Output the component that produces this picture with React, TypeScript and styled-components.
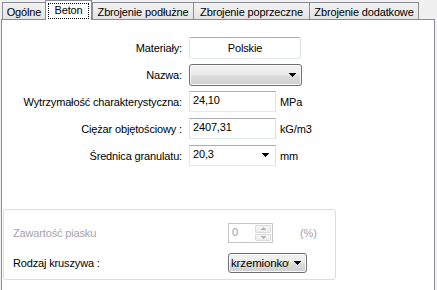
import React from "react";
import styled, { createGlobalStyle, css } from "styled-components";

const GlobalStyle = createGlobalStyle`
  html, body { margin: 0; padding: 0; background: #f0f0f0; }
  body {
    width: 437px; height: 290px; overflow: hidden;
    font-family: "Liberation Sans", Arial, sans-serif;
    font-size: 11px; letter-spacing: -0.15px; color: #000;
  }
  #root { width: 437px; height: 290px; overflow: hidden; }
`;

const Window = styled.div`
  width: 437px;
  height: 290px;
  display: flex;
  flex-direction: column;
  overflow: hidden;
`;

const TabStrip = styled.div`
  display: flex;
  align-items: flex-start;
  height: 20px;
  padding-left: 2px;
  position: relative;
  z-index: 2;
  flex: none;
`;

const Tab = styled.div<{ $w: number; $ml?: number; $active?: boolean }>`
  box-sizing: border-box;
  width: ${(p) => p.$w}px;
  margin-left: ${(p) => p.$ml ?? 0}px;
  margin-top: 2px;
  height: 17px;
  padding-top: 2px;
  border: 1px solid #898c95;
  border-bottom: none;
  background: linear-gradient(#f3f3f3, #e4e4e4);
  display: flex;
  justify-content: center;
  line-height: 14px;
  white-space: nowrap;
  ${(p) =>
    p.$active &&
    css`
      margin-top: 0;
      height: 20px;
      padding: 2px 2px 0 2px;
      background: #fff;
    `}
`;

const Focus = styled.div`
  box-sizing: border-box;
  width: 100%;
  height: 16px;
  border: 1px dotted #000;
  text-align: center;
  line-height: 13px;
`;

const Panel = styled.div`
  box-sizing: border-box;
  margin: -1px 0 0 1px;
  width: 434px;
  height: 300px;
  flex: none;
  border: 1px solid #898c95;
  background: #fff;
  position: relative;
  z-index: 1;
  padding: 17px 0 0 0;
`;

const Form = styled.div`
  display: flex;
  flex-direction: column;
  gap: 6px;
`;

const Row = styled.div`
  display: flex;
  align-items: center;
  height: 21px;
`;

const Label = styled.div`
  width: 180px;
  margin-right: 7px;
  text-align: right;
  white-space: nowrap;
`;

const Unit = styled.div<{ $gap?: number; $disabled?: boolean }>`
  margin-left: ${(p) => p.$gap ?? 4}px;
  color: ${(p) => (p.$disabled ? "#a3a3a3" : "#000")};
  white-space: nowrap;
`;

const boxBorder = css`
  border: 1px solid;
  border-color: #abadb3 #dbdfe6 #e3e9ef #e2e3ea;
  background: #fff;
`;

const ReadBox = styled.div<{ $w: number }>`
  box-sizing: border-box;
  width: ${(p) => p.$w}px;
  height: 22px;
  ${boxBorder};
  border-radius: 2px;
  display: flex;
  align-items: center;
  justify-content: center;
`;

const TextBox = styled.div<{ $w: number }>`
  box-sizing: border-box;
  width: ${(p) => p.$w}px;
  height: 21px;
  ${boxBorder};
  padding: 1px 3px 0 3px;
  line-height: 15px;
`;

const EditCombo = styled.div<{ $w: number }>`
  box-sizing: border-box;
  width: ${(p) => p.$w}px;
  height: 21px;
  ${boxBorder};
  padding: 1px 6px 0 3px;
  line-height: 15px;
  display: flex;
  justify-content: space-between;
  align-items: flex-start;
  svg { margin-top: 6px; }
`;

const ButtonCombo = styled.div<{ $w: number; $h: number }>`
  box-sizing: border-box;
  width: ${(p) => p.$w}px;
  height: ${(p) => p.$h}px;
  border: 1px solid #707070;
  border-radius: 3px;
  background: linear-gradient(#f2f2f2 0%, #ebebeb 50%, #dddddd 51%, #cfcfcf 100%);
  box-shadow: inset 0 0 0 1px #fbfbfb;
  display: flex;
  align-items: center;
  justify-content: space-between;
  padding: 0 5px 0 2px;
  overflow: hidden;
`;

const ComboText = styled.span<{ $w: number }>`
  display: block;
  width: ${(p) => p.$w}px;
  overflow: hidden;
  white-space: nowrap;
  font-size: 11.5px;
`;

const Group = styled.div`
  box-sizing: border-box;
  margin: 43px 0 0 1px;
  width: 333px;
  height: 71px;
  border: 1px solid #d5dfe5;
  border-radius: 3px;
  padding: 13px 0 0 9px;
  display: flex;
  flex-direction: column;
  gap: 10px;
`;

const GroupRow = styled.div`
  display: flex;
  align-items: center;
  height: 20px;
`;

const GroupLabel = styled.div<{ $disabled?: boolean }>`
  width: 215px;
  white-space: nowrap;
  color: ${(p) => (p.$disabled ? "#a3a3a3" : "#000")};
`;

const Spinner = styled.div`
  box-sizing: border-box;
  width: 45px;
  height: 20px;
  border: 1px solid #c3c6cb;
  background: #fff;
  display: flex;
`;

const SpinValue = styled.div`
  flex: 1;
  padding-left: 3px;
  line-height: 17px;
  color: #8ea3c2;
`;

const SpinButtons = styled.div`
  width: 17px;
  display: flex;
  flex-direction: column;
  gap: 1px;
  padding: 1px 1px 1px 0;
  box-sizing: border-box;
`;

const SpinButton = styled.div`
  flex: 1;
  border: 1px solid #dadada;
  border-radius: 1px;
  background: linear-gradient(#f7f7f7, #ececec);
  display: flex;
  align-items: center;
  justify-content: center;
`;

const Arrow = ({ color = "#000" }: { color?: string }) => (
  <svg width="7" height="4" viewBox="0 0 7 4" shapeRendering="crispEdges">
    <path d="M0 0h7v1H0z M1 1h5v1H1z M2 2h3v1H2z M3 3h1v1H3z" fill={color} />
  </svg>
);

const SmallArrow = ({ up }: { up?: boolean }) => (
  <svg width="5" height="3" viewBox="0 0 5 3" shapeRendering="crispEdges">
    {up ? (
      <path d="M2 0h1v1H2z M1 1h3v1H1z M0 2h5v1H0z" fill="#b4b4b4" />
    ) : (
      <path d="M0 0h5v1H0z M1 1h3v1H1z M2 2h1v1H2z" fill="#b4b4b4" />
    )}
  </svg>
);

export default function App() {
  return (
    <>
      <GlobalStyle />
      <Window>
        <TabStrip>
          <Tab $w={44}>Ogólne</Tab>
          <Tab $w={47} $ml={-1} $active>
            <Focus>Beton</Focus>
          </Tab>
          <Tab $w={102}>Zbrojenie podłużne</Tab>
          <Tab $w={117} $ml={-1}>Zbrojenie poprzeczne</Tab>
          <Tab $w={110} $ml={-1}>Zbrojenie dodatkowe</Tab>
        </TabStrip>
        <Panel>
          <Form>
            <Row>
              <Label>Materiały:</Label>
              <ReadBox $w={112}>Polskie</ReadBox>
            </Row>
            <Row>
              <Label>Nazwa:</Label>
              <ButtonCombo $w={113} $h={22}>
                <span />
                <Arrow />
              </ButtonCombo>
            </Row>
            <Row>
              <Label>Wytrzymałość charakterystyczna:</Label>
              <TextBox $w={87}>24,10</TextBox>
              <Unit>MPa</Unit>
            </Row>
            <Row>
              <Label>Ciężar objętościowy :</Label>
              <TextBox $w={87}>2407,31</TextBox>
              <Unit>kG/m3</Unit>
            </Row>
            <Row>
              <Label>Średnica granulatu:</Label>
              <EditCombo $w={87}>
                <span>20,3</span>
                <Arrow />
              </EditCombo>
              <Unit>mm</Unit>
            </Row>
          </Form>
          <Group>
            <GroupRow>
              <GroupLabel $disabled>Zawartość piasku</GroupLabel>
              <Spinner>
                <SpinValue>0</SpinValue>
                <SpinButtons>
                  <SpinButton>
                    <SmallArrow up />
                  </SpinButton>
                  <SpinButton>
                    <SmallArrow />
                  </SpinButton>
                </SpinButtons>
              </Spinner>
              <Unit $gap={27} $disabled>
                (%)
              </Unit>
            </GroupRow>
            <GroupRow>
              <GroupLabel>Rodzaj kruszywa :</GroupLabel>
              <ButtonCombo $w={79} $h={20}>
                <ComboText $w={58}>krzemionkowy</ComboText>
                <Arrow />
              </ButtonCombo>
            </GroupRow>
          </Group>
        </Panel>
      </Window>
    </>
  );
}
